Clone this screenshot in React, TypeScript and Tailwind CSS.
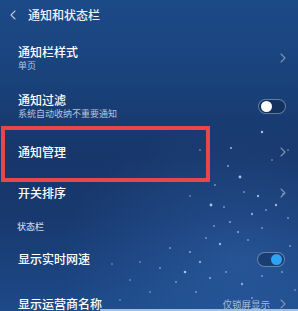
import React from "react";

const stars: [number, number, number, number][] = [
  [262, 132, 1.2, 0.8], [231, 148, 1.1, 0.7], [228, 166, 1, 0.6], [240, 177, 1.4, 0.8],
  [215, 185, 1, 0.5], [244, 192, 1, 0.5], [258, 196, 1.2, 0.7], [283, 194, 1, 0.5],
  [211, 205, 1.4, 0.8], [224, 207, 1, 0.5], [266, 210, 1, 0.5], [276, 205, 1.2, 0.7],
  [230, 222, 1, 0.6], [252, 214, 1.2, 0.6], [214, 226, 1, 0.5], [238, 232, 1.1, 0.6],
  [262, 228, 1, 0.5], [288, 218, 1, 0.5], [206, 238, 1, 0.5], [220, 244, 1.2, 0.7],
  [248, 240, 1, 0.5], [170, 248, 1, 0.5], [190, 252, 1, 0.6], [200, 262, 1.2, 0.6],
  [160, 268, 1, 0.5], [185, 272, 1.3, 0.8], [176, 282, 1, 0.5], [210, 278, 1.1, 0.6],
  [226, 272, 1, 0.5], [242, 284, 1.2, 0.6], [262, 276, 1, 0.5], [282, 272, 1, 0.5],
  [196, 292, 1, 0.5], [150, 292, 1, 0.4], [130, 280, 1, 0.4], [140, 262, 1, 0.4],
  [112, 264, 1, 0.35], [290, 246, 1, 0.5], [252, 298, 1, 0.5], [228, 300, 1, 0.4],
  [272, 160, 1, 0.4], [288, 150, 1, 0.4], [200, 150, 1, 0.4], [190, 196, 1, 0.4],
  [295, 290, 1, 0.4], [120, 300, 1, 0.35],
];

function Chevron({ className = "" }: { className?: string }) {
  return (
    <svg width="6" height="10" viewBox="0 0 6 10" className={className}>
      <path d="M1 1 L5 5 L1 9" fill="none" stroke="#7d93b5" strokeWidth="1.1" strokeLinecap="round" strokeLinejoin="round" />
    </svg>
  );
}

function Toggle({ on }: { on: boolean }) {
  return (
    <div className="relative h-[15px] w-[28px] rounded-full border border-[rgba(200,215,235,0.45)] bg-[rgba(10,25,55,0.35)]">
      <div
        className={
          on
            ? "absolute right-[2px] top-[1px] h-[11px] w-[11px] rounded-full bg-[#2ea3f6]"
            : "absolute left-[2px] top-[1px] h-[11px] w-[11px] rounded-full bg-white"
        }
      />
    </div>
  );
}

export default function App() {
  return (
    <div
      className="relative h-[311px] w-[298px] overflow-hidden text-white"
      style={{
        fontFamily: '"Noto Sans CJK SC", "Noto Sans", sans-serif',
        background:
          "radial-gradient(ellipse 180px 140px at 240px 260px, rgba(60,120,200,0.35), rgba(0,0,0,0)), linear-gradient(180deg, #1c4a87 0%, #19427b 25%, #17366a 50%, #18396f 70%, #1d4a88 100%)",
      }}
    >
      <svg className="pointer-events-none absolute inset-0" width="298" height="311">
        {stars.map(([x, y, r, o], i) => (
          <circle key={i} cx={x} cy={y} r={r} fill="#cfe2ff" opacity={o} />
        ))}
      </svg>

      <div className="relative flex flex-col">
        {/* Header */}
        <div className="flex h-[30px] items-center">
          <svg width="6" height="10" viewBox="0 0 6 10" className="ml-[10px]">
            <path d="M5 1 L1 5 L5 9" fill="none" stroke="#b9c7dc" strokeWidth="1.1" strokeLinecap="round" strokeLinejoin="round" />
          </svg>
          <span className="ml-[12px] text-[12px] font-medium leading-[14px] text-[#eef3fa]">通知和状态栏</span>
        </div>

        {/* Row 1 */}
        <div className="flex h-[56px] items-center justify-between pl-[18px] pr-[12px]">
          <div className="flex flex-col">
            <span className="text-[12px] font-medium leading-[14px]">通知栏样式</span>
            <span className="mt-[1px] text-[9px] leading-[11px] text-[#b4c4dc]">单页</span>
          </div>
          <Chevron />
        </div>

        {/* Row 2 */}
        <div className="flex h-[40px] items-center justify-between pl-[18px] pr-[12px]">
          <div className="flex flex-col">
            <span className="text-[12px] font-medium leading-[14px]">通知过滤</span>
            <span className="mt-[1px] text-[9px] leading-[11px] text-[#b4c4dc]">系统自动收纳不重要通知</span>
          </div>
          <Toggle on={false} />
        </div>

        {/* Row 3 */}
        <div className="flex h-[52px] items-center justify-between pl-[18px] pr-[12px]">
          <span className="text-[12px] font-medium leading-[14px]">通知管理</span>
          <Chevron />
        </div>

        {/* Row 4 */}
        <div className="flex h-[30px] items-center justify-between pl-[18px] pr-[12px]">
          <span className="text-[12px] font-medium leading-[14px]">开关排序</span>
          <Chevron />
        </div>

        {/* Section */}
        <div className="flex h-[36px] items-center pl-[17px]">
          <span className="text-[9px] font-medium leading-[11px] text-[#c9d5e7]">状态栏</span>
        </div>

        {/* Row 5 */}
        <div className="flex h-[30px] items-center justify-between pl-[18px] pr-[13px]">
          <span className="text-[12px] font-medium leading-[14px]">显示实时网速</span>
          <Toggle on={true} />
        </div>

        {/* Row 6 */}
        <div className="flex h-[60px] items-center justify-between pl-[18px] pr-[12px]">
          <span className="text-[12px] font-medium leading-[14px]">显示运营商名称</span>
          <div className="flex items-center gap-[10px]">
            <span className="text-[9.5px] leading-[11px] text-[#a9bbd6]">仅锁屏显示</span>
            <Chevron />
          </div>
        </div>
      </div>

      {/* red annotation box */}
      <div className="absolute left-[1px] top-[126px] h-[56px] w-[209px] border-[4px] border-[#e5474b]" />

      {/* bottom light strip */}
      <div className="absolute bottom-0 left-[100px] right-0 h-[2px] bg-[#9fbfe3]" />
    </div>
  );
}
